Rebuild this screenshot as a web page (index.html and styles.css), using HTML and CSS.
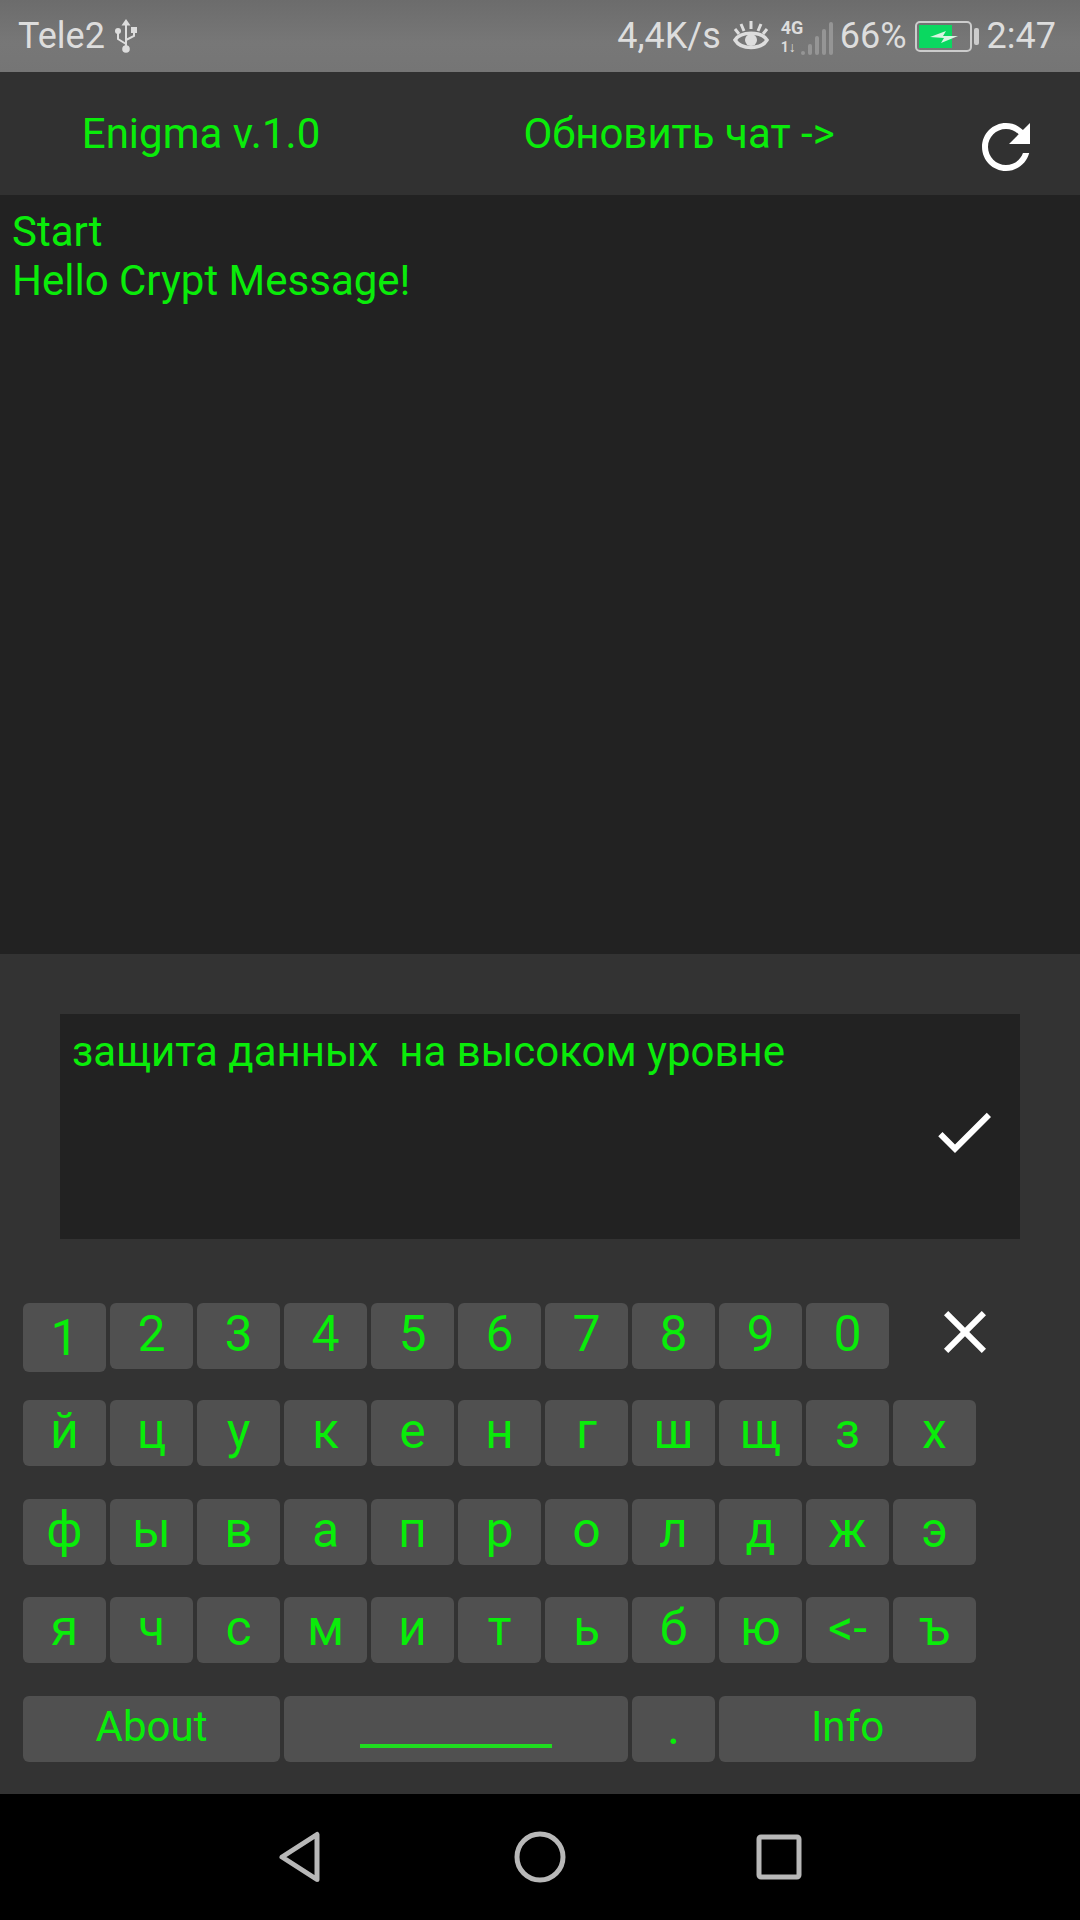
FILE: index.html
```html
<!DOCTYPE html>
<html>
    <head>
        <meta charset="utf-8">
        <title>Enigma</title>
        <link rel="stylesheet" href="styles.css">
    </head>
    <body>
        <div class="status_bar">
            <span class="carrier">Tele2</span>
            <svg class="usb_icon" viewBox="0 0 24 36" width="24" height="36">
                <path d="M12 1l4.500 6.500H13V29h-2V7.500H7.500z" fill="#ddd"/>
                <circle cx="12" cy="31" r="3.800" fill="#ddd"/>
                <path d="M12 26L4 21v-6M12 22l8-4v-4" fill="none" stroke="#ddd" stroke-width="2"/>
                <circle cx="4" cy="13" r="3" fill="#ddd"/>
                <rect x="17" y="9" width="6" height="6" fill="#ddd"/>
            </svg>
            <div class="status_right">
                <span class="net_speed">4,4K/s</span>
                <svg class="eye_icon" viewBox="0 0 36 32" width="36" height="32">
                    <path d="M2 20C8 11 28 11 34 20C28 30 8 30 2 20z" fill="none" stroke="#ddd" stroke-width="3.500"/>
                    <circle cx="18" cy="20" r="6" fill="#ddd"/>
                    <path d="M18 1v8M8 4l3 7M28 4l-3 7M2 9l4 5M34 9l-4 5" stroke="#ddd" stroke-width="3"/>
                </svg>
                <div class="net_type">
                    <span class="net_label">4G</span>
                    <span class="net_label net_arrows">1↓</span>
                </div>
                <div class="signal">
                    <span class="signal_bar bar_1"></span>
                    <span class="signal_bar bar_2"></span>
                    <span class="signal_bar bar_3"></span>
                    <span class="signal_bar bar_4"></span>
                    <span class="signal_bar bar_5"></span>
                </div>
                <span class="percent">66%</span>
                <div class="battery">
                    <div class="battery_fill"></div>
                    <svg class="bolt" viewBox="0 0 28 14" width="28" height="14">
                        <path d="M0 7L16 1l-3 5h15L11 13l3-5z" fill="#d8f5e2"/>
                    </svg>
                </div>
                <div class="battery_nib"></div>
                <span class="clock">2:47</span>
            </div>
        </div>

        <div class="header">
            <span class="title">Enigma v.1.0</span>
            <span class="title">Обновить чат -&gt;</span>
            <svg class="refresh_icon" viewBox="0 0 24 24" width="72" height="72">
                <path d="M17.65 6.35C16.2 4.9 14.21 4 12 4c-4.42 0-7.99 3.58-7.99 8s3.57 8 7.99 8c3.73 0 6.84-2.55 7.73-6h-2.08c-.82 2.33-3.04 4-5.65 4-3.31 0-6-2.69-6-6s2.69-6 6-6c1.66 0 3.14.69 4.22 1.78L13 11h7V4l-2.35 2.35z" fill="#fff"/>
            </svg>
        </div>

        <div class="chat">
            <div>Start</div>
            <div>Hello Crypt Message!</div>
        </div>

        <div class="panel">
            <div class="input_box">
                <span class="input_text">защита данных&nbsp; на высоком уровне</span>
                <svg class="check_icon" viewBox="0 0 24 24" width="72" height="72">
                    <path d="M9 16.17L4.83 12l-1.42 1.41L9 19 21 7l-1.41-1.41z" fill="#fff"/>
                </svg>
            </div>

            <div class="keyboard">
                <div class="key key_pressed">1</div>
                <div class="key">2</div>
                <div class="key">3</div>
                <div class="key">4</div>
                <div class="key">5</div>
                <div class="key">6</div>
                <div class="key">7</div>
                <div class="key">8</div>
                <div class="key">9</div>
                <div class="key">0</div>
                <svg class="close_icon" viewBox="0 0 24 24" width="72" height="72">
                    <path d="M19 6.41L17.59 5 12 10.59 6.41 5 5 6.41 10.59 12 5 17.59 6.41 19 12 13.41 17.59 19 19 17.59 13.41 12z" fill="#fff"/>
                </svg>

                <div class="key">й</div>
                <div class="key">ц</div>
                <div class="key">у</div>
                <div class="key">к</div>
                <div class="key">е</div>
                <div class="key">н</div>
                <div class="key">г</div>
                <div class="key">ш</div>
                <div class="key">щ</div>
                <div class="key">з</div>
                <div class="key">х</div>

                <div class="key">ф</div>
                <div class="key">ы</div>
                <div class="key">в</div>
                <div class="key">а</div>
                <div class="key">п</div>
                <div class="key">р</div>
                <div class="key">о</div>
                <div class="key">л</div>
                <div class="key">д</div>
                <div class="key">ж</div>
                <div class="key">э</div>

                <div class="key">я</div>
                <div class="key">ч</div>
                <div class="key">с</div>
                <div class="key">м</div>
                <div class="key">и</div>
                <div class="key">т</div>
                <div class="key">ь</div>
                <div class="key">б</div>
                <div class="key">ю</div>
                <div class="key">&lt;-</div>
                <div class="key">ъ</div>

                <div class="key key_wide key_word">About</div>
                <div class="key key_space"><span class="space_line"></span></div>
                <div class="key">.</div>
                <div class="key key_wide key_word">Info</div>
            </div>
        </div>

        <div class="nav_bar">
            <svg class="nav_back" viewBox="0 0 44 54" width="44" height="54">
                <path d="M39 4.500V49.500L4 27z" fill="none" stroke="#b8b8b8" stroke-width="5" stroke-linejoin="round"/>
            </svg>
            <svg class="nav_home" viewBox="0 0 54 54" width="54" height="54">
                <circle cx="27" cy="27" r="23" fill="none" stroke="#b8b8b8" stroke-width="5"/>
            </svg>
            <svg class="nav_recent" viewBox="0 0 46 46" width="46" height="46">
                <rect x="3" y="3" width="40" height="40" rx="2" fill="none" stroke="#b8b8b8" stroke-width="5"/>
            </svg>
        </div>
    </body>
</html>
```

FILE: styles.css
```css
html, body {
    margin: 0;
    padding: 0;
}
body {
    width: 1080px;
    height: 1920px;
    display: flex;
    flex-direction: column;
    overflow: hidden;
    font-family: "Roboto", sans-serif;
    background: #000;
    color: #0aec0a;
}

/* status bar */
.status_bar {
    height: 72px;
    display: flex;
    align-items: center;
    padding: 0 24px 0 18px;
    background: linear-gradient(#6c6c6c, #777 60%, #757575);
    color: #ddd;
    font-size: 36px;
}
.usb_icon {
    margin-left: 9px;
}
.status_right {
    margin-left: auto;
    display: flex;
    align-items: center;
}
.eye_icon {
    margin-left: 12px;
}
.net_type {
    margin-left: 12px;
    width: 20px;
    display: flex;
    flex-direction: column;
}
.net_label {
    font-size: 18px;
    font-weight: 700;
    line-height: 21px;
}
.net_arrows {
    font-size: 14px;
    line-height: 18px;
}
.signal {
    height: 34px;
    margin-top: 4px;
    display: flex;
    align-items: flex-end;
    gap: 3px;
}
.signal_bar {
    width: 4px;
    background: #959595;
    border-radius: 2px;
}
.bar_1 { height: 4px; }
.bar_2 { height: 11px; }
.bar_3 { height: 19px; }
.bar_4 { height: 26px; }
.bar_5 { height: 33px; }
.percent {
    margin-left: 7px;
}
.battery {
    position: relative;
    margin-left: 8px;
    width: 49px;
    height: 23px;
    padding: 2px;
    border: 2px solid #ccc;
    border-radius: 5px;
}
.battery_fill {
    width: 33px;
    height: 23px;
    background: #0ad860;
}
.bolt {
    position: absolute;
    left: 13px;
    top: 7px;
}
.battery_nib {
    width: 5px;
    height: 17px;
    margin-left: 2px;
    background: #ccc;
    border-radius: 2px;
}
.clock {
    margin-left: 8px;
}

/* header */
.header {
    height: 123px;
    display: grid;
    grid-template-columns: 402px 554px 100px;
    align-items: center;
    text-align: center;
    background: #313131;
}
.title {
    font-size: 42px;
}
.refresh_icon {
    margin: 27px 0 0 14px;
}

/* chat */
.chat {
    height: 747px;
    padding: 12px 0 0 12px;
    background: #222;
    font-size: 42px;
}

/* input + keyboard */
.panel {
    height: 780px;
    padding-top: 60px;
    background: #333;
}
.input_box {
    position: relative;
    height: 225px;
    margin: 0 60px 0 60px;
    padding: 13px 0 0 12px;
    box-sizing: border-box;
    background: #222;
    font-size: 42px;
}
.check_icon {
    position: absolute;
    right: 20px;
    top: 82px;
}
.keyboard {
    margin: 64px 0 0 23px;
    display: grid;
    grid-template-columns: repeat(11, 83px);
    grid-template-rows: 65px 67px 66px 67px 66px;
    column-gap: 4px;
    row-gap: 32px;
}
.key {
    display: flex;
    align-items: center;
    justify-content: center;
    padding-bottom: 5px;
    box-sizing: border-box;
    height: 66px;
    background: #505050;
    border-radius: 6px;
    font-size: 50px;
}
.key_pressed {
    height: 69px;
    padding-bottom: 0;
}
.key_wide {
    grid-column: span 3;
}
.key_word {
    font-size: 42px;
}
.key_space {
    grid-column: span 4;
    align-items: flex-end;
    padding-bottom: 14px;
}
.space_line {
    width: 192px;
    height: 4px;
    background: #1fdc1f;
}
.close_icon {
    margin: -7px 0 0 36px;
}

/* android nav */
.nav_bar {
    height: 126px;
    display: flex;
    align-items: center;
    padding-left: 278px;
    background: #000;
}
.nav_home {
    margin-left: 191px;
}
.nav_recent {
    margin-left: 189px;
}
```
